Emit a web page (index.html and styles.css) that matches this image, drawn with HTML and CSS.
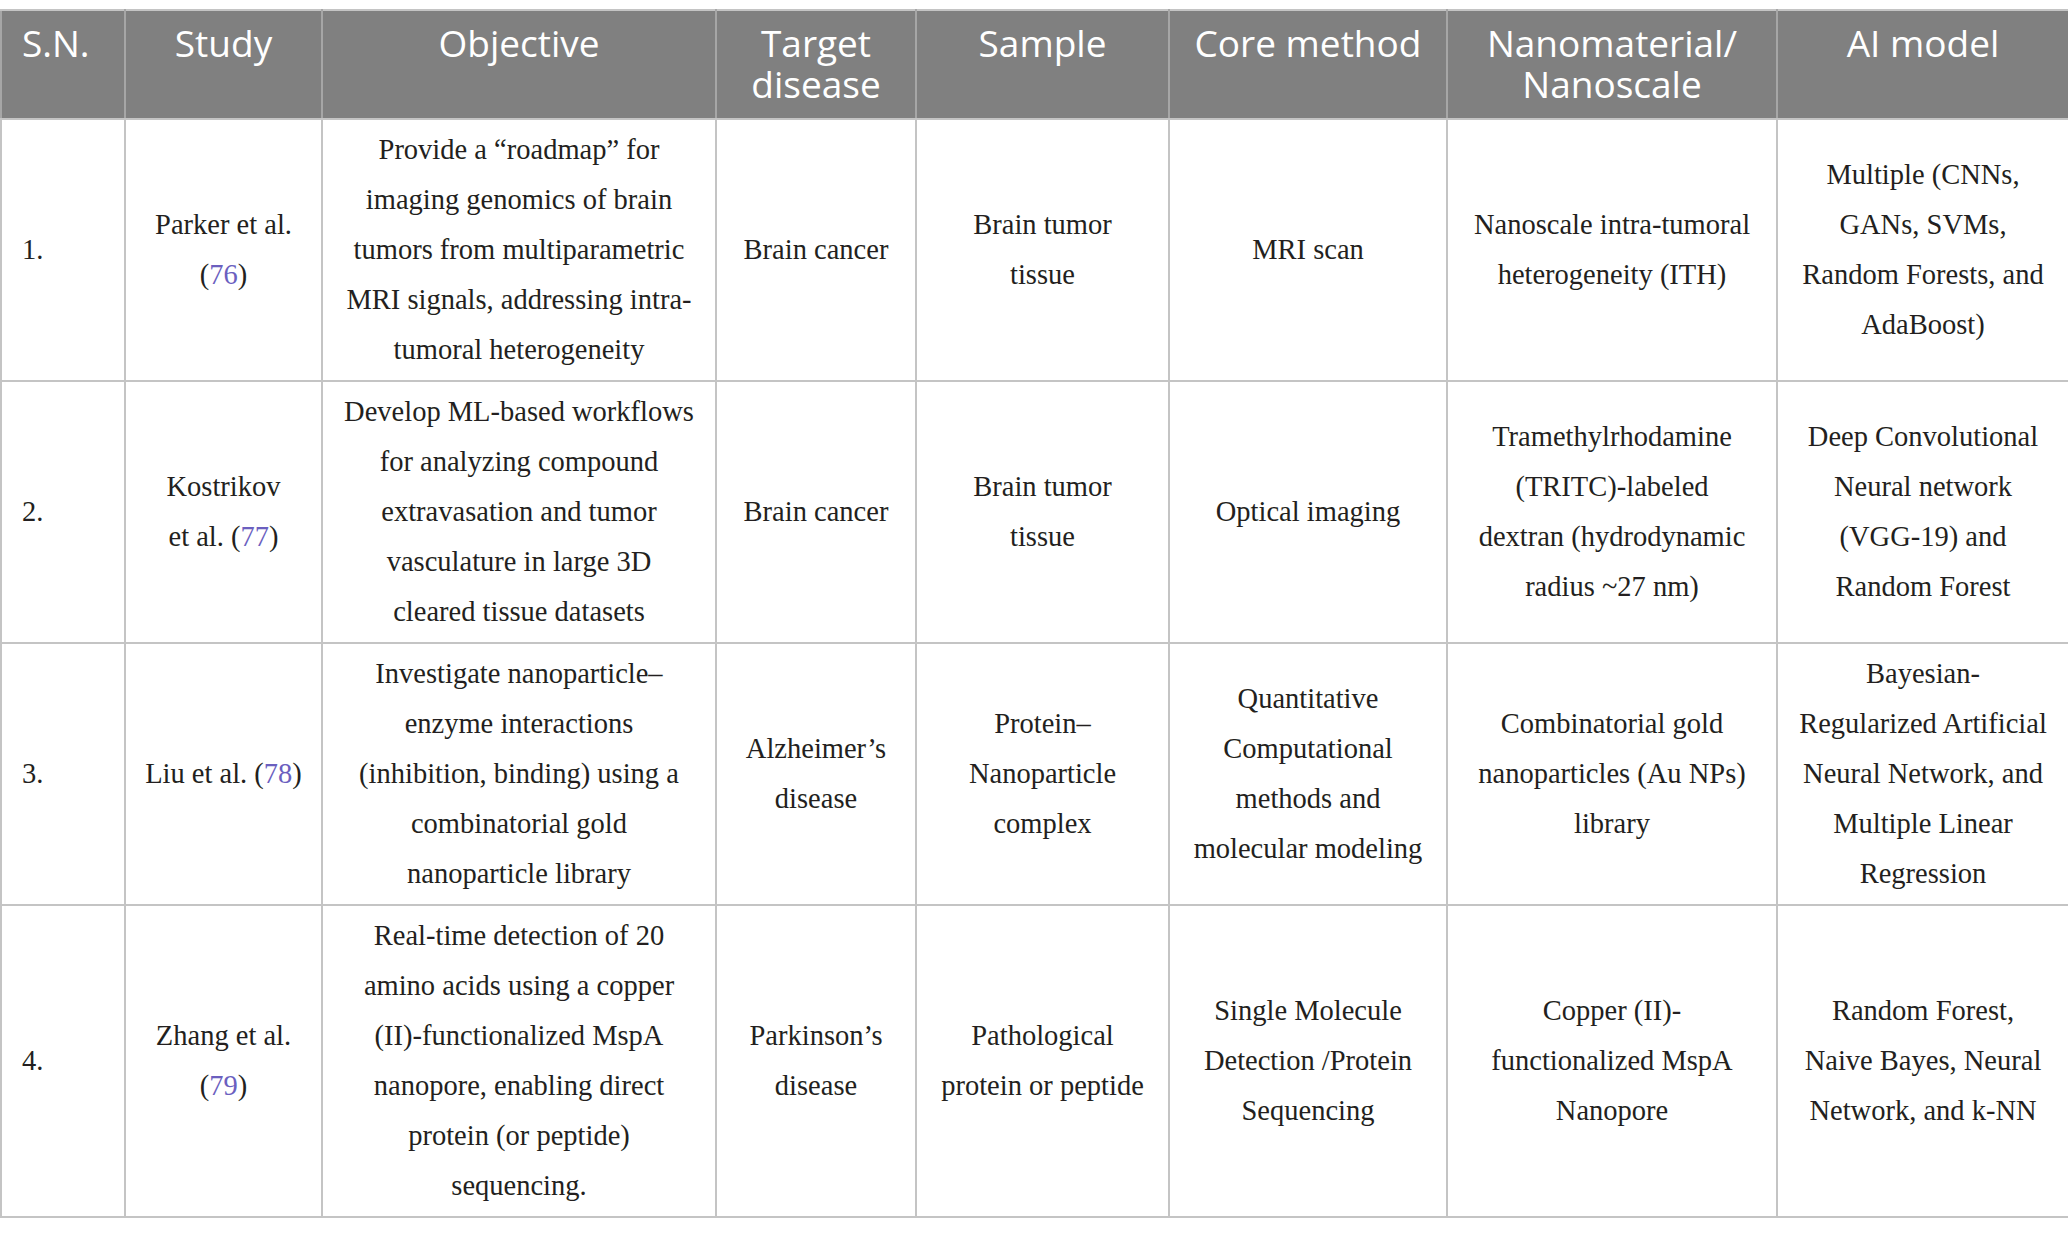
FILE: index.html
```html
<!DOCTYPE html>
<html lang="en">
<head>
    <meta charset="UTF-8">
    <title>Nanomaterial AI studies</title>
    <link rel="stylesheet" href="styles.css">
</head>
<body>
    <div class="table-wrap">
        <table class="study-table">
            <colgroup>
                <col class="c-sn">
                <col class="c-study">
                <col class="c-objective">
                <col class="c-disease">
                <col class="c-sample">
                <col class="c-method">
                <col class="c-nano">
                <col class="c-model">
            </colgroup>
            <thead>
                <tr>
                    <th class="sn">S.N.</th>
                    <th>Study</th>
                    <th>Objective</th>
                    <th>Target<br>disease</th>
                    <th>Sample</th>
                    <th>Core method</th>
                    <th>Nanomaterial/<br>Nanoscale</th>
                    <th>AI model</th>
                </tr>
            </thead>
            <tbody>
                <tr>
                    <td class="sn">1.</td>
                    <td>Parker et al.<br>(<a href="#ref76">76</a>)</td>
                    <td>Provide a “roadmap” for<br>imaging genomics of brain<br>tumors from multiparametric<br>MRI signals, addressing intra-<br>tumoral heterogeneity</td>
                    <td>Brain cancer</td>
                    <td>Brain tumor<br>tissue</td>
                    <td>MRI scan</td>
                    <td>Nanoscale intra-tumoral<br>heterogeneity (ITH)</td>
                    <td>Multiple (CNNs,<br>GANs, SVMs,<br>Random Forests, and<br>AdaBoost)</td>
                </tr>
                <tr>
                    <td class="sn">2.</td>
                    <td>Kostrikov<br>et al. (<a href="#ref77">77</a>)</td>
                    <td>Develop ML-based workflows<br>for analyzing compound<br>extravasation and tumor<br>vasculature in large 3D<br>cleared tissue datasets</td>
                    <td>Brain cancer</td>
                    <td>Brain tumor<br>tissue</td>
                    <td>Optical imaging</td>
                    <td>Tramethylrhodamine<br>(TRITC)-labeled<br>dextran (hydrodynamic<br>radius ~27 nm)</td>
                    <td>Deep Convolutional<br>Neural network<br>(VGG-19) and<br>Random Forest</td>
                </tr>
                <tr>
                    <td class="sn">3.</td>
                    <td>Liu et al. (<a href="#ref78">78</a>)</td>
                    <td>Investigate nanoparticle–<br>enzyme interactions<br>(inhibition, binding) using a<br>combinatorial gold<br>nanoparticle library</td>
                    <td>Alzheimer’s<br>disease</td>
                    <td>Protein–<br>Nanoparticle<br>complex</td>
                    <td>Quantitative<br>Computational<br>methods and<br>molecular modeling</td>
                    <td>Combinatorial gold<br>nanoparticles (Au NPs)<br>library</td>
                    <td>Bayesian-<br>Regularized Artificial<br>Neural Network, and<br>Multiple Linear<br>Regression</td>
                </tr>
                <tr>
                    <td class="sn">4.</td>
                    <td>Zhang et al.<br>(<a href="#ref79">79</a>)</td>
                    <td>Real-time detection of 20<br>amino acids using a copper<br>(II)-functionalized MspA<br>nanopore, enabling direct<br>protein (or peptide)<br>sequencing.</td>
                    <td>Parkinson’s<br>disease</td>
                    <td>Pathological<br>protein or peptide</td>
                    <td>Single Molecule<br>Detection /Protein<br>Sequencing</td>
                    <td>Copper (II)-<br>functionalized MspA<br>Nanopore</td>
                    <td>Random Forest,<br>Naive Bayes, Neural<br>Network, and k-NN</td>
                </tr>
            </tbody>
        </table>
    </div>
</body>
</html>
```

FILE: styles.css
```css
body {
    margin: 0;
    background: #ffffff;
    color: #231f20;
    font-family: "Liberation Serif", "Times New Roman", serif;
}

.table-wrap {
    padding-top: 9px;
}

.study-table {
    width: 2068px;
    table-layout: fixed;
    border-collapse: collapse;
}

.c-sn { width: 124px; }
.c-study { width: 197px; }
.c-objective { width: 394px; }
.c-disease { width: 200px; }
.c-sample { width: 253px; }
.c-method { width: 278px; }
.c-nano { width: 330px; }
.c-model { width: 292px; }

.study-table th,
.study-table td {
    border: 2px solid #c4c4c4;
    text-align: center;
}

.study-table th {
    background-color: #808080;
    color: #ffffff;
    font-family: "Open Sans", "Liberation Sans", sans-serif;
    font-weight: 400;
    font-size: 37px;
    line-height: 41px;
    vertical-align: top;
    padding: 11px 4px 14px;
    border-color: #c4c4c4 #a6a6a6;
}

.study-table td {
    font-size: 28.5px;
    line-height: 50px;
    vertical-align: middle;
    padding: 5px 4px 5px;
}

.study-table .sn {
    text-align: left;
    padding-left: 20px;
}

.study-table a {
    color: #6b5fbf;
    text-decoration: none;
}
```
